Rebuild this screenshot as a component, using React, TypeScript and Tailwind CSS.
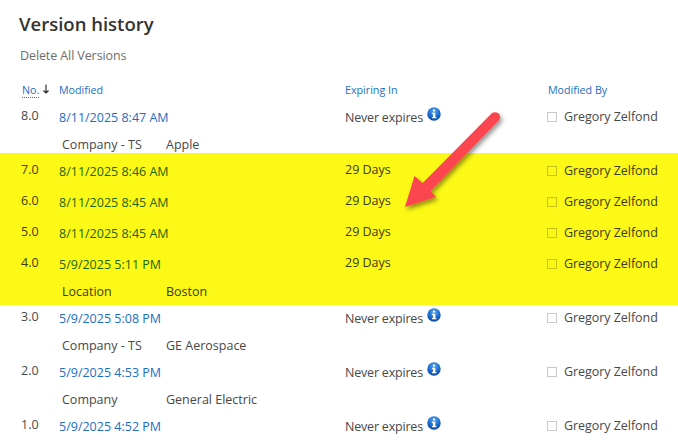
const FONT = "font-['Open_Sans','Noto_Sans',sans-serif]";

function InfoIcon() {
  return (
    <svg width="14" height="14" viewBox="0 0 15 15" className="ml-[4px] -mt-[2px] shrink-0">
      <defs>
        <radialGradient id="infoGrad" cx="50%" cy="30%" r="75%">
          <stop offset="0%" stopColor="#5fa8ee" />
          <stop offset="55%" stopColor="#1a6ed0" />
          <stop offset="100%" stopColor="#0b3f96" />
        </radialGradient>
      </defs>
      <circle cx="7.5" cy="7.5" r="7.2" fill="url(#infoGrad)" />
      <rect x="6.3" y="2.6" width="2.5" height="2.3" rx="0.8" fill="#fff" />
      <path d="M5.3 6.100h3.600v4.500h1.100v1.500H5.300v-1.500h1.100v-3H5.300z" fill="#fff" />
    </svg>
  );
}

type V = {
  no: string;
  date: string;
  exp: string;
  sub?: [string, string];
};

function Row({ v, hi }: { v: V; hi?: boolean }) {
  const never = v.exp === "Never expires";
  return (
    <>
      <div
        className={`grid grid-cols-[38px_286px_202px_1fr] pl-[21px] text-[12.5px] leading-[18px] ${
          v.sub ? "h-[28px]" : "h-[31px]"
        }`}
      >
        <div className={`-mt-[1px] ${hi ? "text-[#3c3b10]" : "text-[#484848]"}`}>{v.no}</div>
        <div className={`mt-[1px] ${hi ? "text-[#1a640f]" : "text-[#1b6ec2]"}`}>{v.date}</div>
        <div className={never ? "mt-[1px] flex items-start tracking-[-0.2px] text-[#484848]" : "-mt-[1px] text-[#3c3b10]"}>
          {v.exp}
          {never && <InfoIcon />}
        </div>
        <div className={`flex items-center self-start tracking-[-0.05px] ${hi ? "text-[#3c3b10]" : "text-[#484848]"}`}>
          <span className={`mr-[7px] h-[10px] w-[10px] border ${hi ? "border-[#c6c413]" : "border-[#c8c8c8]"}`} />
          Gregory Zelfond
        </div>
      </div>
      {v.sub ? (
        <div
          className={`flex pl-[62px] text-[12.5px] leading-[18px] ${
            hi ? "h-[22px] text-[#3c3b10]" : "h-[26px] text-[#484848]"
          }`}
        >
          <div className="w-[104px]">{v.sub[0]}</div>
          <div>{v.sub[1]}</div>
        </div>
      ) : null}
    </>
  );
}

const yellow: V[] = [
  { no: "7.0", date: "8/11/2025 8:46 AM", exp: "29 Days" },
  { no: "6.0", date: "8/11/2025 8:45 AM", exp: "29 Days" },
  { no: "5.0", date: "8/11/2025 8:45 AM", exp: "29 Days" },
  { no: "4.0", date: "5/9/2025 5:11 PM", exp: "29 Days", sub: ["Location", "Boston"] },
];
const rest: V[] = [
  { no: "3.0", date: "5/9/2025 5:08 PM", exp: "Never expires", sub: ["Company - TS", "GE Aerospace"] },
  { no: "2.0", date: "5/9/2025 4:53 PM", exp: "Never expires", sub: ["Company", "General Electric"] },
  { no: "1.0", date: "5/9/2025 4:52 PM", exp: "Never expires" },
];

export default function App() {
  return (
    <div className={`relative h-[447px] w-[678px] overflow-hidden bg-white ${FONT}`}>
      <div className="pl-[19px] pt-[10px] text-[18.5px] font-semibold leading-[28px] text-[#333333]">Version history</div>
      <div className="pl-[20px] pt-[9px] text-[12.5px] leading-[18px] tracking-[-0.1px] text-[#6e6e6e]">Delete All Versions</div>
      <div className="mt-[16px] grid h-[18px] grid-cols-[38px_286px_202px_1fr] pl-[21px] text-[10.7px] leading-[18px] text-[#1b6ec2]">
        <div className="ml-[1px] flex items-start">
          <span className="mt-[2px] border-b border-dotted border-[#1b6ec2] leading-[14px]">No.</span>
          <svg width="8" height="10" viewBox="0 0 8 10" className="ml-[3px] mt-[3px]">
            <path d="M4 0.5V9M1.5 6.5L4 9L6.5 6.500" fill="none" stroke="#222" strokeWidth="1.1" />
          </svg>
        </div>
        <div>Modified</div>
        <div>Expiring In</div>
        <div className="ml-[1px]">Modified By</div>
      </div>
      <div className="mt-[9px]">
        <Row v={{ no: "8.0", date: "8/11/2025 8:47 AM", exp: "Never expires", sub: ["Company - TS", "Apple"] }} />
      </div>
      <div className="-mt-[9px] bg-[#fcf916] pt-[9px]">
        {yellow.map((v) => (
          <Row key={v.no} v={v} hi />
        ))}
      </div>
      <div className="pt-[4px]">
        {rest.map((v) => (
          <Row key={v.no} v={v} />
        ))}
      </div>
      <svg width="678" height="447" viewBox="0 0 678 447" className="pointer-events-none absolute left-0 top-0">
        <defs>
          <filter id="arrowShadow" x="-30%" y="-30%" width="170%" height="170%">
            <feDropShadow dx="2" dy="3" stdDeviation="2" floodColor="#000" floodOpacity="0.4" />
          </filter>
        </defs>
        <path
          d="M492 113 C495 111.500 499.500 112.500 500 116 C500.300 118 499.700 119.500 498.500 120.700 L430.700 191 L436 197 L405 207 L414.500 176 L422.700 183 Z"
          fill="#fb4450"
          filter="url(#arrowShadow)"
        />
      </svg>
    </div>
  );
}
